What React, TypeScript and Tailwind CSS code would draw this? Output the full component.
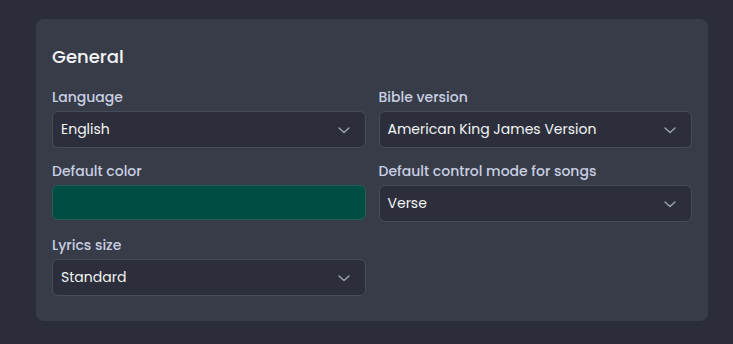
import React from 'react';

const Chevron: React.FC = () => (
  <svg width="20" height="20" viewBox="0 0 24 24" fill="none" stroke="currentColor" strokeWidth="1.6" strokeLinecap="round" strokeLinejoin="round">
    <path d="M6 9.5l6 5.5 6-5.5" />
  </svg>
);

const SelectField: React.FC<{ label: string; value: string }> = ({ label, value }) => (
  <div className="flex flex-col">
    <label className="text-[14px] font-medium text-[#c9cfe2] leading-5 mb-[4px]">{label}</label>
    <div className="h-[37px] flex items-center justify-between pl-[8px] pr-[11px] bg-[#2c2f3b] border border-[#474c59] rounded-md text-[14px] text-[#f2f3f5]">
      <span>{value}</span>
      <span className="text-[#a0a5b3]"><Chevron /></span>
    </div>
  </div>
);

const ColorField: React.FC<{ label: string; color: string }> = ({ label, color }) => (
  <div className="flex flex-col">
    <label className="text-[14px] font-medium text-[#c9cfe2] leading-5 mb-[4px]">{label}</label>
    <div className="h-[35px] rounded-md border border-[#1f6157]" style={{ backgroundColor: color }} />
  </div>
);

export default function App() {
  return (
    <div className="min-h-[344px] bg-[#2b2e3a] px-[36px] pt-[19px] pb-[23px]" style={{ fontFamily: 'Poppins, Inter, "Noto Sans", sans-serif' }}>
      <div className="bg-[#383c48] rounded-lg px-[16px] pt-[26px] pb-[25px] w-[672px]">
        <h2 className="text-[18px] font-medium text-[#f4f5f7] leading-6 mb-[18px]">General</h2>
        <div className="grid grid-cols-2 gap-x-[13px] gap-y-[13px] items-start">
          <SelectField label="Language" value="English" />
          <SelectField label="Bible version" value="American King James Version" />
          <ColorField label="Default color" color="#004d43" />
          <SelectField label="Default control mode for songs" value="Verse" />
          <SelectField label="Lyrics size" value="Standard" />
        </div>
      </div>
    </div>
  );
}
